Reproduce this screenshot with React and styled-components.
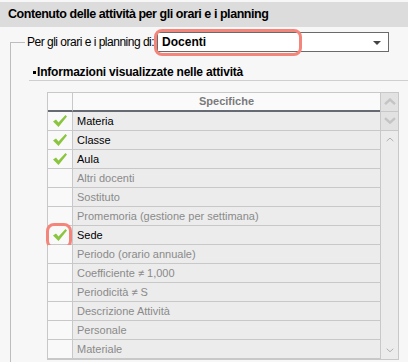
import React from "react";
import styled, { createGlobalStyle } from "styled-components";

const GlobalStyle = createGlobalStyle`
  html, body {
    margin: 0;
    padding: 0;
    background: #f7f7f7;
    font-family: "Liberation Sans", Arial, sans-serif;
    font-size: 12px;
    color: #000;
  }
`;

const Page = styled.div`
  width: 408px;
  height: 362px;
  overflow: hidden;
  padding-top: 2px;
  box-sizing: border-box;
`;

const TitleBar = styled.div`
  height: 25px;
  line-height: 25px;
  background: #dcdcdc;
  padding-left: 8px;
  font-size: 12.5px;
  font-weight: bold;
  letter-spacing: -0.45px;
`;

const Fieldset = styled.fieldset`
  margin: 5px 0 0 10px;
  padding: 0;
  border: 1px solid #bdbdbd;
  border-right: none;
  border-bottom: none;
  min-width: 0;
  height: 330px;
  box-sizing: border-box;
`;

const Legend = styled.legend`
  display: flex;
  align-items: center;
  margin-left: 14px;
  padding: 0 0 0 2px;
  width: calc(100% - 16px);
`;

const LegendLabel = styled.span`
  font-size: 12px;
  letter-spacing: -0.5px;
  margin-right: 3px;
  white-space: nowrap;
`;

const SelectBox = styled.div`
  position: relative;
  width: 232px;
  height: 20px;
  box-sizing: border-box;
  border: 1px solid #6a6a6a;
  background: #fff;
  display: flex;
  align-items: center;
  padding-left: 4px;
  font-size: 12px;
  font-weight: bold;
`;

const Arrow = styled.span`
  position: absolute;
  right: 7px;
  top: 8px;
  width: 0;
  height: 0;
  border-left: 4px solid transparent;
  border-right: 4px solid transparent;
  border-top: 4px solid #444;
`;

const Highlight = styled.div`
  position: absolute;
  left: ${(p) => p.left}px;
  top: ${(p) => p.top}px;
  width: ${(p) => p.w}px;
  height: ${(p) => p.h}px;
  box-sizing: border-box;
  border: 3px solid #f3857a;
  border-radius: 8px;
  pointer-events: none;
`;

const Section = styled.div`
  margin: 12px 0 0 18px;
`;

const SectionTitle = styled.div`
  height: 16px;
  line-height: 16px;
  border-bottom: 1px solid #cfcfcf;
  font-weight: bold;
  font-size: 12px;
  letter-spacing: -0.2px;
  padding-left: 4px;
  position: relative;

  &::before {
    content: "";
    position: absolute;
    left: 4px;
    top: 7px;
    width: 3px;
    height: 3px;
    background: #000;
  }
  span {
    padding-left: 4px;
  }
`;

const Table = styled.div`
  margin: 11px 0 0 36px;
  width: 352px;
  box-sizing: border-box;
  border: 1px solid #c8c8c8;
  display: flex;
  font-size: 11px;
`;

const Grid = styled.div`
  flex: 1;
  display: grid;
  grid-template-columns: 25px 1fr;
  grid-template-rows: 19px;
  grid-auto-rows: 19px;
`;

const HeadCell = styled.div`
  line-height: 17px;
  background: #fafafa;
  border-bottom: 2px solid #666b73;
  border-right: ${(p) => (p.first ? "1px solid #c8c8c8" : "none")};
  text-align: center;
  font-weight: bold;
  color: #7a7a7a;
`;

const CheckCell = styled.div`
  position: relative;
  background: #f9f9f9;
  border-right: 1px solid #c8c8c8;
  border-bottom: 1px solid #c8c8c8;
  display: flex;
  align-items: center;
  justify-content: center;
`;

const TextCell = styled.div`
  background: #ececec;
  border-bottom: 1px solid #c8c8c8;
  padding-left: 4px;
  line-height: 18px;
  white-space: nowrap;
  color: ${(p) => (p.active ? "#000" : "#8a8a8a")};
`;

const Scrollbar = styled.div`
  width: 17px;
  border-left: 1px solid #c8c8c8;
  background: #ececec;
  display: flex;
  flex-direction: column;
`;

const ScrollButton = styled.div`
  height: 18px;
  background: #e2e2e2;
  border-bottom: 1px solid #c8c8c8;
  display: flex;
  align-items: center;
  justify-content: center;
`;

const Track = styled.div`
  flex: 1;
  display: flex;
  flex-direction: column;
  justify-content: space-between;
  align-items: center;
  padding: 6px 0 6px;
`;

const Chevron = ({ up, size = 12, color = "#c4c4c4", width = 2.5 }) => (
  <svg width={size} height={size * 0.6} viewBox="0 0 12 7">
    <path
      d={up ? "M1 6 L6 1.5 L11 6" : "M1 1 L6 5.5 L11 1"}
      fill="none"
      stroke={color}
      strokeWidth={width}
    />
  </svg>
);

const Check = () => (
  <svg width="16" height="14" viewBox="0 0 16 14">
    <path d="M1 7.5 L4 5.5 L6.5 8.5 L13.5 1 L15 2.5 L6.5 13 Z" fill="#8bc53f" />
  </svg>
);

const rows = [
  { label: "Materia", on: true },
  { label: "Classe", on: true },
  { label: "Aula", on: true },
  { label: "Altri docenti" },
  { label: "Sostituto" },
  { label: "Promemoria (gestione per settimana)" },
  { label: "Sede", on: true, marked: true },
  { label: "Periodo (orario annuale)" },
  { label: "Coefficiente \u2260 1,000" },
  { label: "Periodicità \u2260 S" },
  { label: "Descrizione Attività" },
  { label: "Personale" },
  { label: "Materiale" },
];

export default function App() {
  return (
    <Page>
      <GlobalStyle />
      <TitleBar>Contenuto delle attività per gli orari e i planning</TitleBar>
      <Fieldset>
        <Legend>
          <LegendLabel>Per gli orari e i planning di:</LegendLabel>
          <SelectBox>
            Docenti
            <Arrow />
            <Highlight left={-4} top={-4} w={148} h={27} />
          </SelectBox>
        </Legend>
        <Section>
          <SectionTitle>
            <span>Informazioni visualizzate nelle attività</span>
          </SectionTitle>
        </Section>
        <Table>
          <Grid>
            <HeadCell first />
            <HeadCell>Specifiche</HeadCell>
            {rows.map((r) => (
              <React.Fragment key={r.label}>
                <CheckCell>
                  {r.on && <Check />}
                  {r.marked && <Highlight left={-2} top={-3} w={26} h={26} />}
                </CheckCell>
                <TextCell active={r.on}>{r.label}</TextCell>
              </React.Fragment>
            ))}
          </Grid>
          <Scrollbar>
            <ScrollButton>
              <Chevron up />
            </ScrollButton>
            <ScrollButton>
              <Chevron />
            </ScrollButton>
            <Track>
              <Chevron up size={8} color="#b0b0b0" width={1.5} />
              <Chevron size={8} color="#b0b0b0" width={1.5} />
            </Track>
          </Scrollbar>
        </Table>
      </Fieldset>
    </Page>
  );
}
